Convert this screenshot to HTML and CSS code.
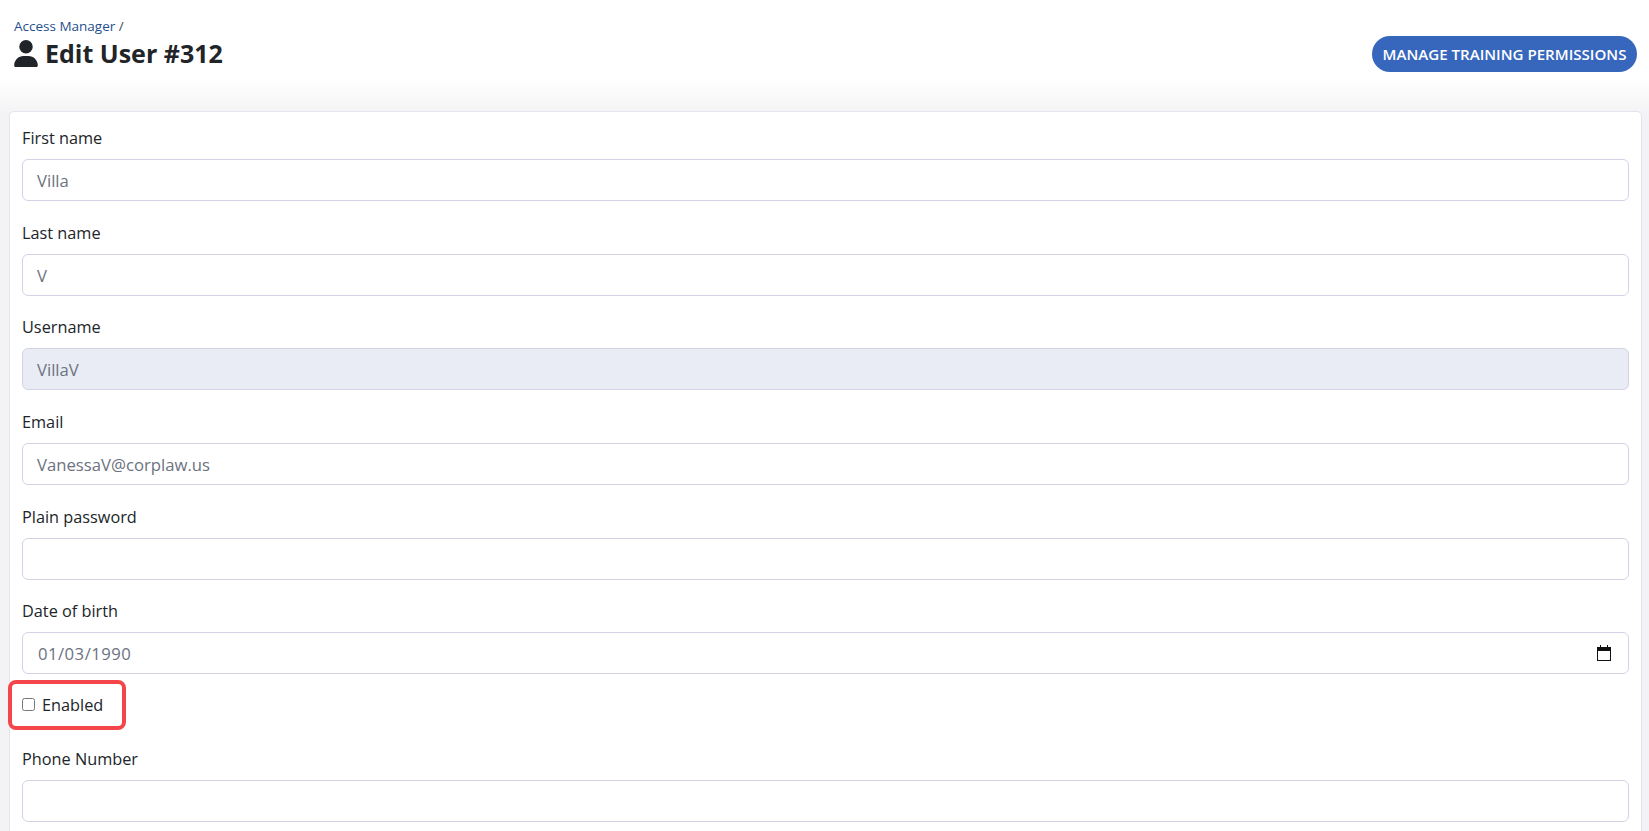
FILE: index.html
```html
<!DOCTYPE html>
<html lang="en">
<head>
<meta charset="utf-8">
<title>Edit User #312</title>
<link rel="stylesheet" href="styles.css">
</head>
<body>
<header class="page-header">
  <div class="titles">
    <div class="crumb"><a href="#">Access Manager</a> /</div>
    <h1><svg class="user-icon" viewBox="0 0 448 512" aria-hidden="true"><path d="M224 256a128 128 0 1 0 0-256 128 128 0 1 0 0 256zm-45.700 48C79.800 304 0 383.800 0 482.300 0 498.700 13.300 512 29.700 512h388.600c16.400 0 29.700-13.300 29.700-29.700C448 383.800 368.200 304 269.700 304h-91.400z"/></svg>Edit User #312</h1>
  </div>
  <a class="btn" href="#">MANAGE TRAINING PERMISSIONS</a>
</header>
<main class="card">
  <div class="field"><label>First name</label><div class="input">Villa</div></div>
  <div class="field"><label>Last name</label><div class="input">V</div></div>
  <div class="field"><label>Username</label><div class="input disabled">VillaV</div></div>
  <div class="field"><label>Email</label><div class="input">VanessaV@corplaw.us</div></div>
  <div class="field"><label>Plain password</label><div class="input"></div></div>
  <div class="field"><label>Date of birth</label><div class="input date"><span>01/03/1990</span>
    <svg class="cal" viewBox="0 0 14 16" aria-hidden="true"><path d="M3 0h1v2h6V0h1v2h3v14H0V2h3zM1 6v9h12V6z"/></svg></div></div>
  <div class="check"><span class="box"></span><span>Enabled</span><span class="mark"></span></div>
  <div class="field"><label>Phone Number</label><div class="input"></div></div>
</main>
</body>
</html>
```
FILE: styles.css
```css
* { box-sizing: border-box; }
html, body { height: 100%; }
body {
  margin: 0;
  overflow: hidden;
  background: linear-gradient(#fff 0, #fff 78px, #f3f3f5 114px);
  color: #212529;
  font-family: "Open Sans", "Noto Sans", sans-serif;
  font-size: 16.300px;
}
.page-header {
  display: flex;
  justify-content: space-between;
  align-items: flex-start;
  height: 111px;
  padding: 18px 12px 0 14px;
}
.crumb { font-size: 13.500px; line-height: 17px; color: #3b4a5c; }
.crumb a { color: #1f4f8f; text-decoration: none; }
h1 {
  display: flex;
  align-items: center;
  gap: 7px;
  margin: 0;
  font-size: 25px;
  line-height: 36px;
  font-weight: 700;
  color: #212529;
}
.user-icon { width: 24px; height: 27px; fill: #212529; }
.btn {
  margin-top: 18px;
  width: 265px;
  height: 36px;
  border-radius: 18px;
  background: #3766bd;
  color: #fff;
  font-size: 15.100px;
  font-weight: 600;
  line-height: 36px;
  text-align: center;
  text-decoration: none;
  white-space: nowrap;
}
.card {
  position: relative;
  margin: 0 7px 0 9px;
  padding: 0 12px;
  height: 760px;
  background: #fff;
  border: 1px solid #e4e3ef;
  border-radius: 5px;
}
.field { height: 94.700px; padding-top: 15px; }
label { display: block; height: 23px; line-height: 23px; margin-bottom: 9px; color: #212529; }
.input {
  display: flex;
  align-items: center;
  justify-content: space-between;
  height: 42px;
  padding: 1px 14px 0;
  border: 1px solid #d3d3e6;
  border-radius: 6px;
  background: #fff;
  color: #6c7280;
  font-size: 16.700px;
}
.disabled { background: #e9ecf4; }
.date { padding-left: 15px; padding-right: 17px; padding-top: 0; letter-spacing: .47px; }
.cal { width: 14px; height: 16px; fill: #111; }
.check {
  display: flex;
  align-items: center;
  gap: 7px;
  height: 53px;
  padding-bottom: 4px;
}
.box {
  width: 13px;
  height: 13px;
  margin-top: -1px;
  border: 1px solid #767676;
  border-radius: 2.500px;
  background: #fff;
}
.mark {
  position: absolute;
  left: -2px;
  top: 568px;
  width: 118px;
  height: 50px;
  border: 4px solid #f4464a;
  border-radius: 8px;
}
```
